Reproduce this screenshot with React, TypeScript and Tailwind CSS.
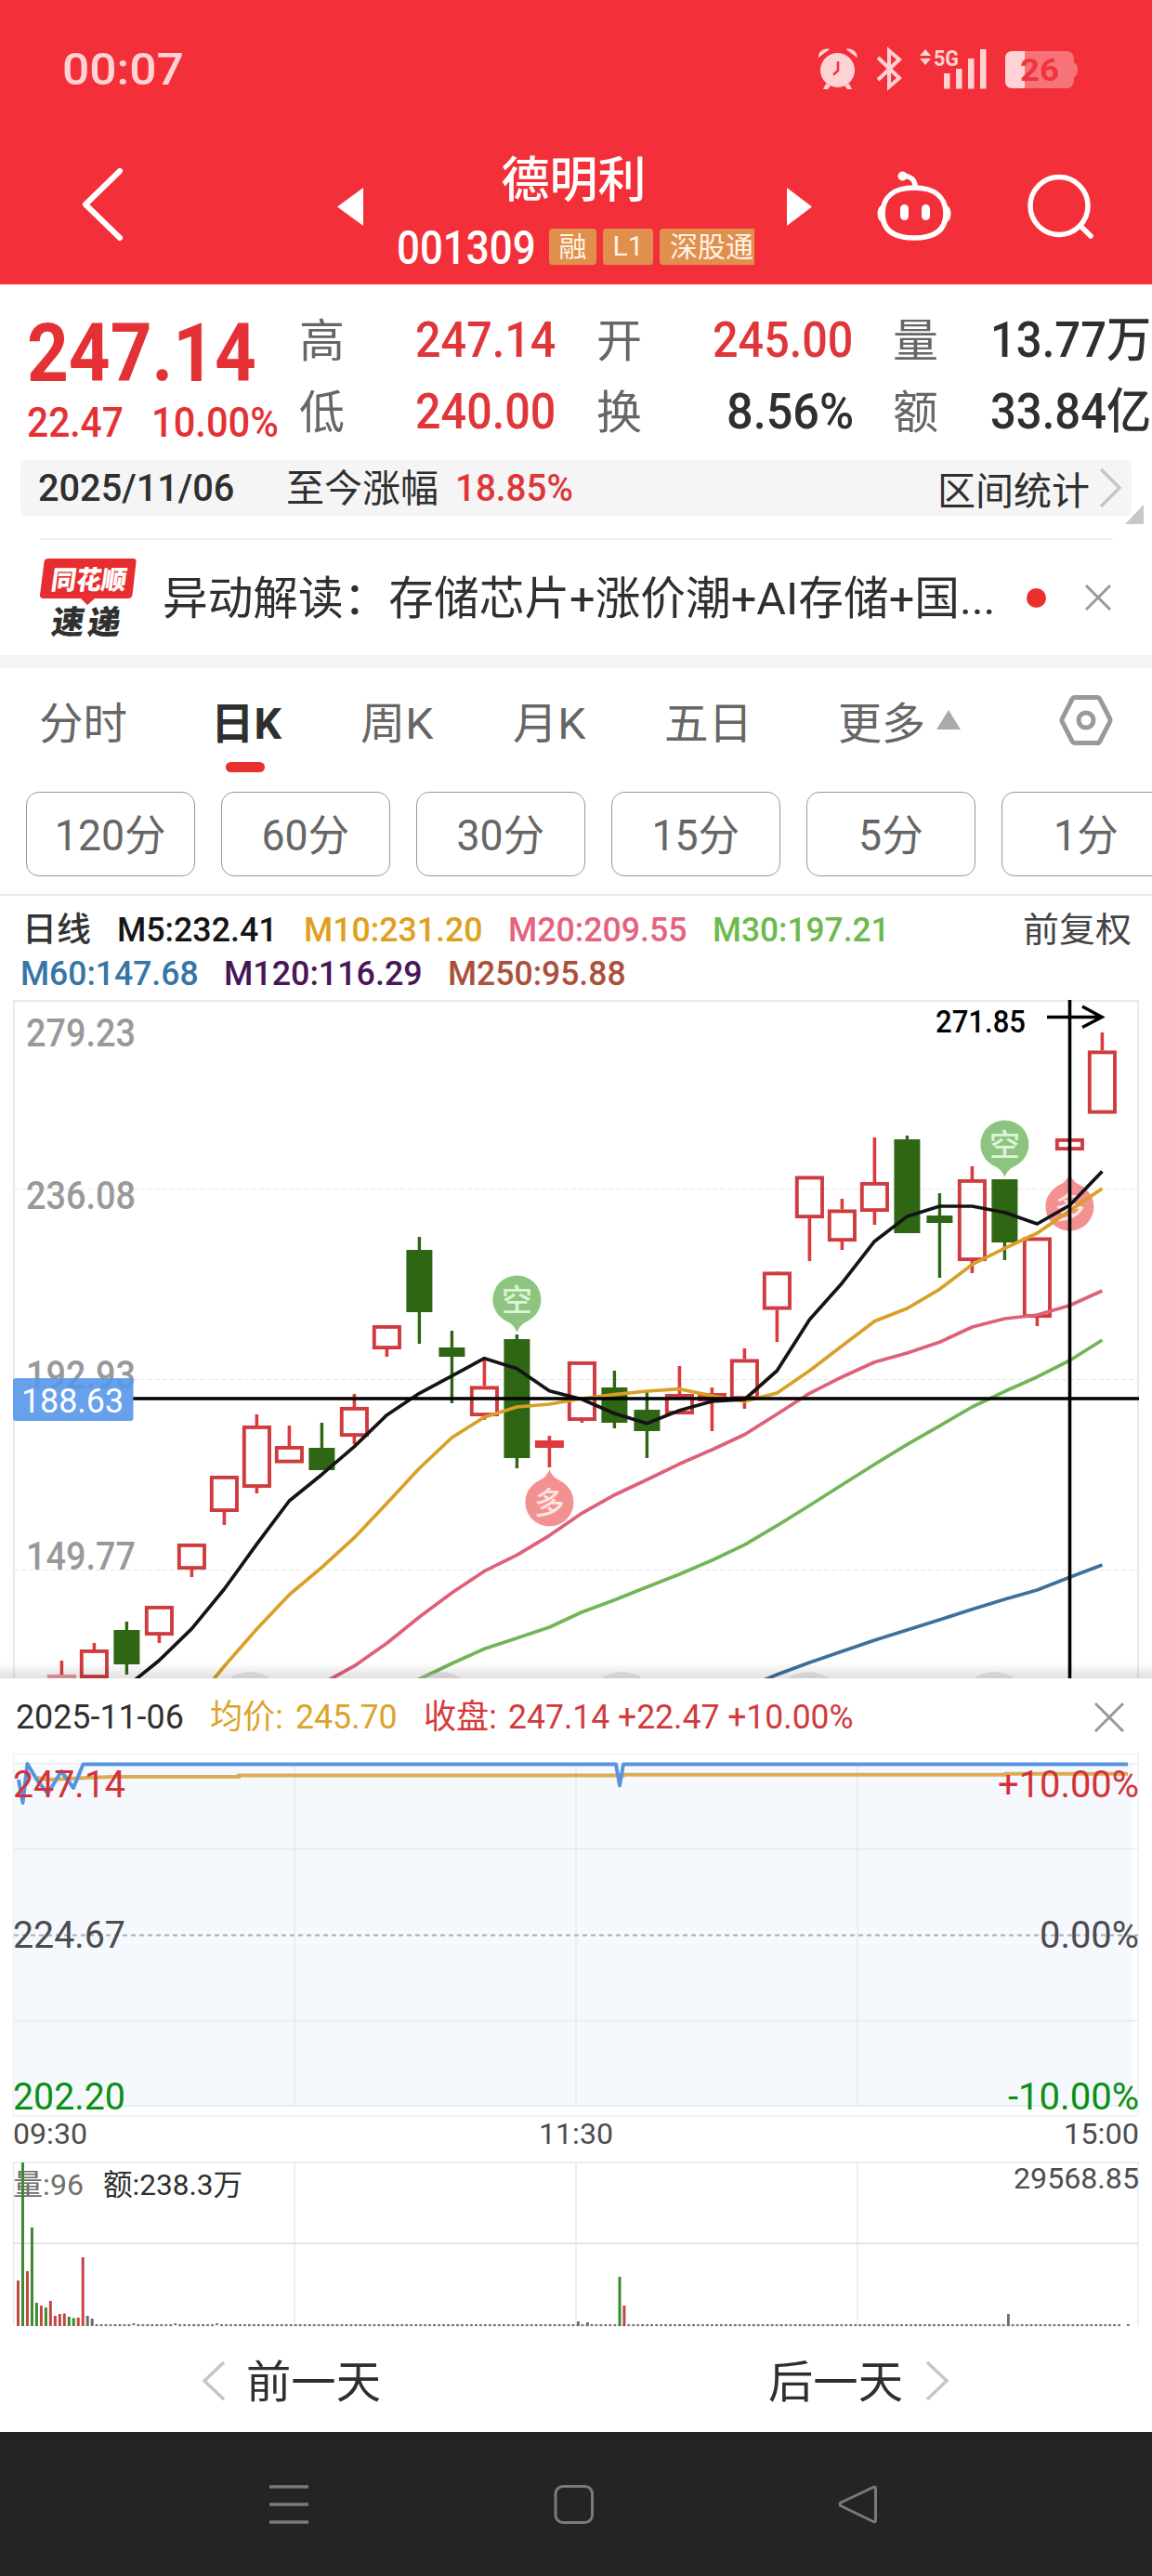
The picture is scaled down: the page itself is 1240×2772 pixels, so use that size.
import { useLayoutEffect, useRef, type ReactNode } from "react";

/** Text condensed or stretched horizontally so that it fills the width of its box. */
function Fit({ className = "", children }: { className?: string; children: ReactNode }) {
  const box = useRef<HTMLSpanElement>(null);
  const text = useRef<HTMLSpanElement>(null);
  useLayoutEffect(() => {
    if (box.current && text.current) {
      const ratio = box.current.clientWidth / text.current.offsetWidth;
      text.current.style.transform = `scaleX(${ratio})`;
    }
  }, []);
  return (
    <span ref={box} className={`block shrink-0 leading-none ${className}`}>
      <span ref={text} className="inline-block origin-left whitespace-pre">{children}</span>
    </span>
  );
}

function StatusBar() {
  return (
    <div className="flex h-[100px] items-end pr-[80px] pl-[67px] text-[#ffd3d5]">
      <Fit className="mb-[1px] w-[131px] text-[48px] font-medium">00:07</Fit>
      <svg className="mb-[4px] ml-auto overflow-visible" width="280" height="52" viewBox="881 44 280 52" fill="currentColor">
        <circle cx="902.500" cy="75.500" r="18.500" />
        <path d="M882 62c-1-6 6-11 12-9zM923.500 62c1-6-6-11-12-9zM890 90l-3 6h5l3-4zM915 90l3 6h-5l-3-4z" />
        <path d="M903 66v10l-5 4.500" fill="none" stroke="#f33039" strokeWidth="2.500" />
        <path d="M946 62l23 22-11 9.500V54.500l11 9.500-23 22" fill="none" stroke="currentColor" strokeWidth="4" />
        <path d="M991 60l6-7 6 7zM991 63l6 7 6-7z" />
        <text x="1006" y="70.500" fontSize="24" fontWeight="700" textLength="27" lengthAdjust="spacingAndGlyphs">5G</text>
        <rect x="1017" y="79" width="6.500" height="16.500" />
        <rect x="1030" y="74" width="6.500" height="21.500" />
        <rect x="1043" y="63" width="6.500" height="32.500" />
        <rect x="1056" y="53" width="6.500" height="42.500" />
        <rect x="1083" y="55" width="74" height="40" rx="8" fill="#f87378" />
        <path d="M1156 67q5 1 5 8t-5 8z" fill="#f87378" />
        <path d="M1104 55h-13q-8 0-8 8v24q0 8 8 8h13z" />
        <text x="1099" y="87" fontSize="33" fontWeight="700" fill="#ee343d" textLength="42" lengthAdjust="spacingAndGlyphs">26</text>
      </svg>
    </div>
  );
}

function Header() {
  return (
    <header className="h-[306px] bg-[#f33039] text-white">
      <StatusBar />
      <div className="flex h-[206px] pl-[86px]">
        <svg className="mt-[80px]" width="48" height="80" viewBox="0 0 48 80" fill="none" stroke="currentColor" strokeWidth="6">
          <path d="M43 4L6 40l37 36" strokeLinecap="round" strokeLinejoin="round" />
        </svg>
        <svg className="mt-[102px] ml-[229px]" width="28" height="41" fill="currentColor">
          <path d="M28 0v41L0 20.500z" />
        </svg>
        <div className="ml-[36px] w-[385px]">
          <h1 className="mt-[69px] text-center text-[52px] leading-[52px] font-medium">
            <span className="-ml-[4px]">德明利</span>
          </h1>
          <div className="mt-[19px] flex h-[50px] items-center text-[30px] text-[#fff3e6]">
            <Fit className="mt-[3px] w-[150px] text-[50px] font-medium text-white">001309</Fit>
            <span className="ml-[14px] flex h-[39px] w-[51px] items-center justify-center rounded-[4px] bg-[#e18f4d] pt-[2px] leading-none">融</span>
            <span className="ml-[7px] flex h-[39px] w-[54px] items-center justify-center rounded-[4px] bg-[#e18f4d] leading-none">L1</span>
            <span className="ml-[7px] flex h-[39px] w-[102px] items-center overflow-hidden rounded-l-[4px] bg-[#e18f4d] pt-[2px] pl-[11px] leading-none whitespace-nowrap">深股通</span>
          </div>
        </div>
        <svg className="mt-[102px] ml-[35px]" width="28" height="41" fill="currentColor">
          <path d="M0 0v41l27-20.500z" />
        </svg>
        <svg className="mt-[80px] ml-[65px]" width="88" height="84" viewBox="940 180 88 84" fill="none" stroke="currentColor" strokeWidth="5.500">
          <path d="M984 202c22 0 34 10 34 28 0 17-11 26-34 26s-34-9-34-26c0-18 12-28 34-28z" />
          <path d="M985 201c0-8-4-11-13-12" />
          <circle cx="971.500" cy="189.500" r="5" fill="currentColor" stroke="none" />
          <path d="M951 220c-8 2-8 18 0 20zM1017 220c8 2 8 18 0 20z" fill="currentColor" strokeWidth="1" />
          <path d="M973.500 224.500v8M996.500 224.500v8" strokeWidth="9" strokeLinecap="round" />
        </svg>
        <svg className="mt-[80px] ml-[72px]" width="80" height="84" viewBox="1100 180 80 84" fill="none" stroke="currentColor" strokeWidth="5.500">
          <circle cx="1140" cy="221.500" r="31" />
          <path d="M1163 243l11 11" strokeLinecap="round" />
        </svg>
      </div>
    </header>
  );
}

function Quote() {
  return (
    <section className="flex h-[189px] text-[53px] font-medium text-[#2f2f2f]">
      <div className="w-[323px] pl-[29px] text-[#e43136]">
        <Fit className="mt-[31px] w-[247px] text-[87px] font-bold">247.14</Fit>
        <div className="mt-[8px] flex text-[45px]">
          <Fit className="w-[104px]">22.47</Fit>
          <Fit className="ml-[30px] w-[137px]">10.00%</Fit>
        </div>
      </div>
      <div className="mt-[34px] grid h-[130px] grid-cols-[49px_76px_151px_44px_49px_76px_151px_43px_49px_56px_174px] grid-rows-[53px_53px] gap-y-[24px]">
        <span className="text-[49px] leading-[55px] font-normal text-[#666]">高</span>
        <Fit className="col-start-3 w-[151px] text-[#df363a]">247.14</Fit>
        <span className="col-start-5 text-[49px] leading-[55px] font-normal text-[#666]">开</span>
        <Fit className="col-start-7 w-[151px] text-[#df363a]">245.00</Fit>
        <span className="col-start-9 text-[49px] leading-[55px] font-normal text-[#666]">量</span>
        <Fit className="col-start-11 w-[173px]">13.77<span className="text-[52px]">万</span></Fit>
        <span className="text-[49px] leading-[55px] font-normal text-[#666]">低</span>
        <Fit className="col-start-3 w-[151px] text-[#df363a]">240.00</Fit>
        <span className="col-start-5 text-[49px] leading-[55px] font-normal text-[#666]">换</span>
        <Fit className="col-start-7 ml-[15px] w-[137px]">8.56%</Fit>
        <span className="col-start-9 text-[49px] leading-[55px] font-normal text-[#666]">额</span>
        <Fit className="col-start-11 w-[173px]">33.84<span className="text-[52px]">亿</span></Fit>
      </div>
    </section>
  );
}

function RangeBar() {
  return (
    <section className="relative h-[84px] px-[22px]">
      <div className="flex h-[60px] items-center rounded-[6px] bg-[#f5f5f5] text-[41px] text-[#2f2f2f]">
        <Fit className="ml-[19px] w-[211px] font-medium">2025/11/06</Fit>
        <Fit className="mt-[2px] ml-[56px] w-[164px]">至今涨幅</Fit>
        <Fit className="ml-[18px] w-[127px] font-medium text-[#df363a]">18.85%</Fit>
        <Fit className="mt-[9px] ml-[392px] w-[164px]">区间统计</Fit>
        <svg className="ml-[9px]" width="28" height="44" fill="none" stroke="#c6c6c6" strokeWidth="3.500">
          <path d="M3 2l20 20L3 42" />
        </svg>
      </div>
      <svg className="absolute top-[48px] right-[9px]" width="20" height="21" fill="#c8c8c8">
        <path d="M20 0v21H0z" />
      </svg>
    </section>
  );
}

function News() {
  return (
    <section className="h-[126px]">
      <div className="mr-[42px] ml-[43px] h-[2px] bg-[#eeeeee]" />
      <div className="flex h-[124px] items-center pl-[43px]">
        <svg className="overflow-visible" width="104" height="90" viewBox="43 597 104 90">
          <path d="M52 600h91q4 0 3.500 4l-4 35q-.5 4-5 4H102l-8 7-7-7H47q-4.500 0-4-4l4.500-35q.5-4 4.500-4z" fill="#e62e30" />
          <text x="54" y="633" fontSize="28" fontWeight="900" fill="#fff" textLength="81" lengthAdjust="spacingAndGlyphs" transform="skewX(-8) translate(89 0)">同花顺</text>
          <text x="55" y="681" fontSize="35" fontWeight="900" fill="#303030" textLength="74" transform="skewX(-8) translate(95 0)">速递</text>
        </svg>
        <Fit className="mt-[3px] ml-[28px] w-[896px] text-[49px] text-[#2f2f2f]">异动解读：存储芯片+涨价潮+AI存储+国...</Fit>
        <span className="ml-[34px] h-[21px] w-[21px] rounded-full bg-[#e8302f]" />
        <svg className="ml-[41px]" width="30" height="30" fill="none" stroke="#999" strokeWidth="3">
          <path d="M2 2l26 26M28 2L2 28" />
        </svg>
      </div>
    </section>
  );
}

function Tabs() {
  return (
    <nav className="flex h-[133px] pt-[36px] text-[47px] text-[#666]">
      <Fit className="ml-[42px] w-[95px]">分时</Fit>
      <div className="ml-[90px] w-[76px] text-[#2f2f2f]">
        <Fit className="w-[76px] font-bold">日K</Fit>
        <div className="mt-[18px] ml-[16px] h-[11px] w-[42px] rounded-full bg-[#e8302f]" />
      </div>
      <Fit className="ml-[85px] w-[79px]">周K</Fit>
      <Fit className="ml-[85px] w-[79px]">月K</Fit>
      <Fit className="ml-[84px] w-[95px]">五日</Fit>
      <Fit className="ml-[92px] w-[94px]">更多</Fit>
      <svg className="mt-[9px] ml-[12px]" width="26" height="22" fill="#aaa">
        <path d="M13 0l13 21H0z" />
      </svg>
      <svg className="-mt-[8px] ml-[106px]" width="58" height="56" fill="none" stroke="#999" strokeWidth="5">
        <path d="M17 3.500h24q2 0 3 2L54.500 26q1 2 0 4L44 50.500q-1 2-3 2H17q-2 0-3-2L3.500 30q-1-2 0-4L14 5.500q1-2 3-2z" />
        <circle cx="29" cy="28" r="8" />
      </svg>
    </nav>
  );
}

function Periods() {
  return (
    <div className="flex h-[112px] gap-[28px] overflow-hidden border-b-2 border-[#e8e8e8] pl-[28px] text-[46px] leading-none text-[#666]">
      {["120分", "60分", "30分", "15分", "5分", "1分"].map((label) => (
        <button key={label} className="flex h-[91px] w-[182px] shrink-0 items-center justify-center rounded-[14px] border-[1.5px] border-[#999] pt-[3px]">
          <span className="scale-x-[0.97]">{label}</span>
        </button>
      ))}
    </div>
  );
}

function Averages() {
  return (
    <section className="h-[112px] pt-[17px] text-[37px] font-medium">
      <div className="flex h-[38px] items-center">
        <Fit className="mt-[2px] ml-[24px] w-[74px] text-[36px] text-[#333]">日线</Fit>
        <Fit className="ml-[28px] w-[173px] text-[#151515]">M5:232.41</Fit>
        <Fit className="ml-[28px] w-[193px] text-[#dfa01e]">M10:231.20</Fit>
        <Fit className="ml-[27px] w-[193px] text-[#e4637c]">M20:209.55</Fit>
        <Fit className="ml-[27px] w-[191px] text-[#6cba4c]">M30:197.21</Fit>
        <Fit className="mt-[2px] ml-[143px] w-[117px] font-normal text-[#444]">前复权</Fit>
      </div>
      <div className="mt-[9px] flex h-[38px] items-center">
        <Fit className="ml-[22px] w-[192px] text-[#3576a6]">M60:147.68</Fit>
        <Fit className="ml-[27px] w-[214px] text-[#471558]">M120:116.29</Fit>
        <Fit className="ml-[27px] w-[192px] text-[#aa503c]">M250:95.88</Fit>
      </div>
    </section>
  );
}

const STEP = 35;
const FIRST = 66.4;

/** Daily candles: rising flag, high, body top, body bottom, low (screen heights). */
const CANDLES: [boolean, number, number, number, number][] = [
  [true, 1787, 1802, 1830, 1830],
  [true, 1768, 1775, 1806, 1806],
  [false, 1745, 1754, 1791, 1802],
  [true, 1728, 1728, 1760, 1768],
  [true, 1661, 1661, 1689, 1697],
  [true, 1588, 1588, 1627, 1641],
  [true, 1522, 1534, 1601, 1607],
  [true, 1534, 1556, 1574.5, 1574],
  [false, 1531, 1558, 1582, 1582],
  [true, 1500, 1514, 1546, 1554],
  [true, 1426, 1426, 1452, 1460],
  [false, 1331, 1345, 1412, 1446],
  [false, 1432, 1450, 1460, 1510],
  [true, 1462, 1491.5, 1524, 1528],
  [false, 1436, 1441, 1569, 1580],
  [true, 1545, 1550, 1558, 1579],
  [true, 1465, 1465, 1529, 1531],
  [false, 1475, 1493, 1531, 1537],
  [false, 1498, 1517, 1540, 1569],
  [true, 1470, 1500, 1522, 1522],
  [true, 1493, 1499, 1508, 1540],
  [true, 1451, 1462.5, 1506, 1516],
  [true, 1368, 1368.5, 1409.500, 1444],
  [true, 1266, 1265.5, 1311, 1357],
  [true, 1290, 1301.5, 1336, 1345],
  [true, 1224, 1272, 1304, 1318],
  [false, 1222, 1226, 1327, 1327],
  [false, 1284, 1308, 1316, 1375],
  [true, 1255, 1269, 1357, 1370],
  [false, 1269, 1269, 1337, 1356],
  [true, 1332, 1331.5, 1418, 1427],
  [true, 1225, 1225, 1238, 1238],
  [true, 1111, 1130.5, 1198.5, 1198],
];

/** Moving averages: colour, first candle index, heights per candle. */
const LINES: { color: string; from: number; y: number[] }[] = [
  { color: "#3f7099", from: 21, y: [1817, 1802, 1789, 1777, 1765, 1754, 1743, 1731.7, 1721, 1711, 1697.3, 1684] },
  { color: "#72b556", from: 10, y: [1824, 1807, 1790, 1774.3, 1762.7, 1751, 1734.7, 1721.7, 1707.7, 1694, 1679, 1662.3, 1641.7, 1620, 1597.7, 1575.7, 1554.3, 1534.3, 1514, 1497.3, 1481.7, 1464, 1442] },
  { color: "#de6079", from: 8, y: [1812, 1792.7, 1768.3, 1740, 1714, 1690.7, 1673.3, 1652.3, 1628.3, 1608.7, 1592.3, 1575.3, 1560, 1543.7, 1521.7, 1499.3, 1481.7, 1465.7, 1456, 1444.3, 1428, 1419, 1415, 1404.7, 1389] },
  { color: "#d99f27", from: 4, y: [1836, 1793, 1753, 1716, 1686.7, 1654.7, 1617.7, 1580, 1547, 1525, 1514, 1511, 1505, 1500.7, 1497, 1494.7, 1502, 1508, 1499, 1475, 1448.3, 1421.7, 1408, 1387.3, 1360.7, 1343.3, 1327, 1302.7, 1279] },
  { color: "#141414", from: 2, y: [1815, 1786.7, 1752.7, 1710, 1661.7, 1615, 1586.7, 1556.7, 1522.7, 1499.3, 1480.7, 1461.7, 1472.7, 1496.7, 1505.7, 1521, 1531.7, 1517.7, 1508, 1506, 1475, 1420, 1380.7, 1335.7, 1309, 1298, 1298, 1304.7, 1317, 1297, 1260.5] },
];

function Candle({ index }: { index: number }) {
  const [up, high, top, bottom, low] = CANDLES[index];
  const x = FIRST + STEP * index;
  if (!up) {
    return (
      <g fill="#2f6614">
        <rect x={x - 1.7} y={high} width="3.400" height={low - high} />
        <rect x={x - 14} y={top} width="28" height={bottom - top} />
      </g>
    );
  }
  return (
    <g fill="#dc3a3c">
      <rect x={x - 1.8} y={high} width="3.600" height={top - high} />
      <rect x={x - 1.8} y={bottom} width="3.600" height={Math.max(0, low - bottom)} />
      {bottom - top < 10 ? (
        <rect x={x - 15.5} y={top} width="31" height={bottom - top} />
      ) : (
        <rect
          x={x - 13.6}
          y={top + 1.9}
          width="27.200"
          height={bottom - top - 3.8}
          fill="none"
          stroke="#cf3c40"
          strokeWidth="3.900"
          strokeOpacity={index ? 1 : 0.5}
        />
      )}
    </g>
  );
}

function Marker({ x, y, short }: { x: number; y: number; short?: boolean }) {
  return (
    <g transform={`translate(${x} ${y})`}>
      <path
        d="M-26 0a26 26 0 1 1 52 0c0 13-9 21-18 25q-5 3-8 10q-3-7-8-10c-9-4-18-12-18-25z"
        fill={short ? "#8dc580" : "#f39090"}
        transform={short ? undefined : "scale(1 -1)"}
      />
      <text y="12" textAnchor="middle" fontSize="33" fontWeight="500" fill={short ? "#dcf5d8" : "#fde4e2"}>{short ? "空" : "多"}</text>
    </g>
  );
}

function KLineChart() {
  return (
    <svg className="block" width="1240" height="730" viewBox="0 1076 1240 730">
      <defs>
        <linearGradient id="fade" x1="0" y1="0" x2="0" y2="1">
          <stop offset="0" stopColor="#000" stopOpacity="0" />
          <stop offset="1" stopColor="#000" stopOpacity="0.12" />
        </linearGradient>
      </defs>
      <path d="M15 1806V1077H1225V1806" fill="none" stroke="#e9e9e9" strokeWidth="2" />
      <path d="M15 1279.500H1225M15 1484.500H1225M15 1689.500H1225" stroke="#e6e6e6" strokeWidth="1.200" strokeDasharray="5 3" />
      <g fill="#999" fontSize="42" fontWeight="500">
        <text x="28" y="1126" textLength="118" lengthAdjust="spacingAndGlyphs">279.23</text>
        <text x="28" y="1301" textLength="118" lengthAdjust="spacingAndGlyphs">236.08</text>
        <text x="28" y="1494" textLength="118" lengthAdjust="spacingAndGlyphs">192.93</text>
        <text x="28" y="1689" textLength="118" lengthAdjust="spacingAndGlyphs">149.77</text>
      </g>
      {CANDLES.map((_, i) => (
        <Candle key={i} index={i} />
      ))}
      <Marker x={556.4} y={1398.500} short />
      <Marker x={1081.4} y={1231.500} short />
      <Marker x={591.4} y={1616.500} />
      <Marker x={1151.4} y={1298.500} />
      {LINES.map((line) => (
        <polyline
          key={line.color}
          points={line.y.map((y, i) => `${FIRST + STEP * (line.from + i)},${y}`).join(" ")}
          fill="none"
          stroke={line.color}
          strokeWidth="3.700"
          strokeLinejoin="round"
        />
      ))}
      <path d="M143 1505H1226M1151.500 1076V1806" stroke="#000" strokeWidth="3.600" />
      <path d="M1127 1094.500H1186M1165 1083l21 11.500-21 11" fill="none" stroke="#000" strokeWidth="3.500" />
      <text x="1007" y="1111" fontSize="34" fontWeight="500" textLength="97" lengthAdjust="spacingAndGlyphs">271.85</text>
      <rect x="14" y="1483" width="129.500" height="46" rx="3" fill="#5797ea" fillOpacity="0.9" />
      <text x="23" y="1520" fontSize="36" fill="#fff" textLength="110" lengthAdjust="spacingAndGlyphs">188.63</text>
      <rect x="0" y="1789" width="1240" height="17" fill="url(#fade)" />
      {[269, 474, 669.5, 870, 1070].map((x) => (
        <circle key={x} cx={x} cy="1837" r="38" fill="#bbb" fillOpacity="0.45" />
      ))}
    </svg>
  );
}

function DayHeading() {
  return (
    <div className="flex h-[81px] items-center pt-[2px] text-[36px] text-[#2f2f2f]">
      <Fit className="ml-[17px] w-[181px]">2025-11-06</Fit>
      <Fit className="ml-[28px] w-[79px] text-[#dba42c]">均价:</Fit>
      <Fit className="ml-[13px] w-[110px] text-[#dba42c]">245.70</Fit>
      <Fit className="ml-[28px] w-[79px] text-[#d33a3c]">收盘:</Fit>
      <Fit className="ml-[12px] w-[372px] text-[#d33a3c]">247.14 +22.47 +10.00%</Fit>
      <svg className="ml-[258px]" width="34" height="34" fill="none" stroke="#999" strokeWidth="3">
        <path d="M2 2l30 30M32 2L2 32" />
      </svg>
    </div>
  );
}

/** Colour and height of the volume bar of each opening minute. */
const OPENING: [string, number][] = [
  ["#c14646", 49], ["#3c8a30", 176], ["#c14646", 59], ["#3c8a30", 106], ["#3c8a30", 25], ["#c14646", 22],
  ["#3c8a30", 20], ["#c14646", 27], ["#c14646", 11], ["#c14646", 13], ["#c14646", 13.500], ["#3c8a30", 10],
  ["#3c8a30", 8.500], ["#c14646", 9], ["#c8434a", 74], ["#6c6c6c", 11], ["#6c6c6c", 8],
];

function MinuteChart() {
  const quiet = Array.from({ length: 222 }, (_, i) => i + 17);
  return (
    <svg className="block" width="1240" height="620" viewBox="0 1887 1240 620">
      <rect x="15" y="1900" width="1204" height="366" fill="#f5f8fd" />
      <g fill="none" stroke="#e8eaec" strokeWidth="1.500">
        <path d="M14.500 2277V1887.500H1225V2277z" stroke="#f1f1f1" />
        <path d="M15 1898H1225M15 1989.500H1225M15 2174.500H1225M15 2266H1225" />
        <path d="M317 1898V2266M620 1898V2266M923 1898V2266" />
        <path d="M14.500 2503V2327H1225V2503" />
        <path d="M317 2327V2503M620 2327V2503M923 2327V2503" />
        <path d="M15 2414H1225" stroke="#dcdcdc" />
      </g>
      <path d="M15 2082.500H1225" stroke="#aaadb1" strokeWidth="1.800" strokeDasharray="5 4" />
      <path d="M39 1913l13 2 23-1 20-1 26-1h136v-1.500H671v-.7h412v-1h131" fill="none" stroke="#dbac55" strokeWidth="3.900" />
      <path d="M20 1915l4.500 25 5-42 10 17 12 15 14.500-24 13 18 10.500-25.500H663l4 23 4-23H1214" fill="none" stroke="#5794e0" strokeWidth="4" strokeLinejoin="round" />
      <g fontSize="40" fill="#4a4d50">
        <text x="14" y="1934" fill="#d2323a" textLength="121" lengthAdjust="spacingAndGlyphs">247.14</text>
        <text x="1074" y="1934" fill="#d2323a" textLength="152" lengthAdjust="spacingAndGlyphs">+10.00%</text>
        <text x="14" y="2096" textLength="121" lengthAdjust="spacingAndGlyphs">224.67</text>
        <text x="1119" y="2096" textLength="107" lengthAdjust="spacingAndGlyphs">0.00%</text>
        <text x="14" y="2270" fill="#0a8f14" textLength="121" lengthAdjust="spacingAndGlyphs">202.20</text>
        <text x="1085" y="2270" fill="#0a8f14" textLength="141" lengthAdjust="spacingAndGlyphs">-10.00%</text>
      </g>
      <g fontSize="32" fill="#4d4d4d">
        <text x="14" y="2307" textLength="80" lengthAdjust="spacingAndGlyphs">09:30</text>
        <text x="580" y="2307" textLength="80" lengthAdjust="spacingAndGlyphs">11:30</text>
        <text x="1145" y="2307" textLength="81" lengthAdjust="spacingAndGlyphs">15:00</text>
        <text x="1091" y="2355" textLength="135" lengthAdjust="spacingAndGlyphs">29568.85</text>
        <text x="14" y="2362" fill="#6f6f6f" textLength="76" lengthAdjust="spacingAndGlyphs">量:96</text>
        <text x="111" y="2362" fill="#2f2f2f" textLength="150" lengthAdjust="spacingAndGlyphs">额:238.3万</text>
      </g>
      {OPENING.map(([color, h], i) => (
        <rect key={i} x={18 + i * 4.98} y={2503 - h} width="3" height={h} fill={color} />
      ))}
      {quiet.map((i) => (
        <rect key={i} x={18 + i * 4.98} y={i % 9 === 7 && i < 50 ? 2500 : 2501} width="2.800" height="2.200" fill="#777" />
      ))}
      <rect x="621" y="2498" width="2.800" height="5" fill="#6c6c6c" />
      <rect x="631" y="2499" width="2.800" height="4" fill="#6c6c6c" />
      <rect x="665.500" y="2450" width="3" height="53" fill="#3c8a30" />
      <rect x="670.400" y="2481" width="3" height="22" fill="#c14646" />
      <rect x="1084" y="2490" width="2.800" height="13" fill="#6c6c6c" />
      <rect x="1213" y="2501" width="2.800" height="2" fill="#777" />
    </svg>
  );
}

function DayPager() {
  return (
    <div className="flex h-[110px] items-center text-[48px] text-[#2f2f2f]">
      <svg className="ml-[217px]" width="26" height="42" fill="none" stroke="#c6c6c6" strokeWidth="3.500">
        <path d="M24 1L3 21l21 20" />
      </svg>
      <Fit className="mt-[3px] ml-[22px] w-[145px]">前一天</Fit>
      <Fit className="mt-[3px] ml-[417px] w-[145px]">后一天</Fit>
      <svg className="ml-[24px]" width="26" height="42" fill="none" stroke="#c6c6c6" strokeWidth="3.500">
        <path d="M2 1l21 20L2 41" />
      </svg>
    </div>
  );
}

function SystemNav() {
  return (
    <div className="flex h-[155px] bg-[#242424] pt-[55px] pl-[288px]">
      <svg width="46" height="46" stroke="#7a7a7a" strokeWidth="3.500">
        <path d="M2 4h42M2 23h42M2 42h42" />
      </svg>
      <svg className="ml-[261px]" width="46" height="46" fill="none" stroke="#7a7a7a" strokeWidth="3">
        <rect x="3" y="3.500" width="39.500" height="39" rx="8" />
      </svg>
      <svg className="ml-[259px]" width="46" height="46" fill="none" stroke="#7a7a7a" strokeWidth="3" strokeLinejoin="round">
        <path d="M40 4.500L5 21q-2 1.500 0 3.500l35 17q2.500 1 2.500-1.500V6q0-2.500-2.500-1.500z" />
      </svg>
    </div>
  );
}

export default function App() {
  return (
    <main className="h-[2772px] w-[1240px] overflow-hidden bg-white font-[Roboto,'Noto_Sans_CJK_SC',sans-serif]">
      <Header />
      <Quote />
      <RangeBar />
      <News />
      <div className="h-[14px] bg-[#f4f4f4]" />
      <Tabs />
      <Periods />
      <Averages />
      <KLineChart />
      <DayHeading />
      <MinuteChart />
      <DayPager />
      <SystemNav />
    </main>
  );
}
